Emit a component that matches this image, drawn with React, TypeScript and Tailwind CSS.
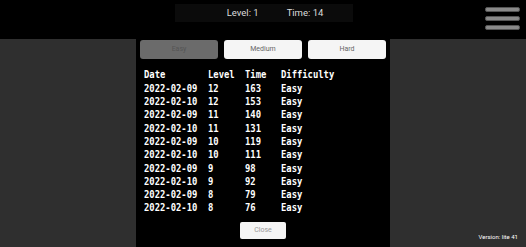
const rows: [string, string, string, string][] = [
  ["2022-02-09", "12", "163", "Easy"],
  ["2022-02-10", "12", "153", "Easy"],
  ["2022-02-09", "11", "140", "Easy"],
  ["2022-02-10", "11", "131", "Easy"],
  ["2022-02-09", "10", "119", "Easy"],
  ["2022-02-10", "10", "111", "Easy"],
  ["2022-02-09", "9", "98", "Easy"],
  ["2022-02-10", "9", "92", "Easy"],
  ["2022-02-09", "8", "79", "Easy"],
  ["2022-02-10", "8", "76", "Easy"],
];

// column widths are in unscaled units; the table is squeezed with scale-x
function Row({ cells }: { cells: string[] }) {
  return (
    <div className="flex h-[13.3px] items-center">
      <span className="w-[72.3px]">{cells[0]}</span>
      <span className="w-[41.8px]">{cells[1]}</span>
      <span className="w-[40.7px]">{cells[2]}</span>
      <span>{cells[3]}</span>
    </div>
  );
}

export default function App() {
  return (
    <div
      className="flex h-[247px] w-[526px] flex-col overflow-hidden bg-black"
      style={{ fontFamily: "Roboto, 'Liberation Sans', sans-serif" }}
    >
      <div className="flex h-[39px] items-start">
        <div className="ml-[175px] mt-[4px] flex h-[18px] w-[178px] items-center justify-center gap-[28px] bg-[#0b0b0b] pl-[22px] text-[9.5px] text-[#dddddd]">
          <span>Level: 1</span>
          <span>Time: 14</span>
        </div>
        <div className="ml-auto mr-[6px] mt-[7px] flex flex-col gap-[4px]">
          <div className="h-[5px] w-[35px] rounded-[2px] border border-[#555] bg-[#8a8a8a]" />
          <div className="h-[5px] w-[35px] rounded-[2px] border border-[#555] bg-[#8a8a8a]" />
          <div className="h-[5px] w-[35px] rounded-[2px] border border-[#555] bg-[#8a8a8a]" />
        </div>
      </div>
      <div className="flex flex-1">
        <div className="w-[136px] bg-[#2f2f2f]" />
        <div className="flex w-[254px] flex-col bg-black">
          <div className="mt-[1px] flex gap-[6px] px-[4px]">
            <button className="h-[19px] w-[78px] rounded-[3px] bg-[#6b6b6b] text-[7px] text-[#555]">Easy</button>
            <button className="h-[19px] w-[78px] rounded-[3px] bg-[#f5f5f5] text-[7px] text-[#666]">Medium</button>
            <button className="h-[19px] w-[78px] rounded-[3px] bg-[#f5f5f5] text-[7px] text-[#666]">Hard</button>
          </div>
          <div className="mt-[9px] pl-[8px]">
            <div
              className="origin-left scale-x-[0.885] text-[10px] font-bold leading-none whitespace-pre text-white"
              style={{ fontFamily: "'DejaVu Sans Mono', monospace" }}
            >
              <div className="mb-[0.8px]">
                <Row cells={["Date", "Level", "Time", "Difficulty"]} />
              </div>
              {rows.map((r, i) => (
                <Row key={i} cells={r} />
              ))}
            </div>
          </div>
          <div className="mt-[7px] flex justify-center">
            <button className="h-[17px] w-[46px] rounded-[2px] bg-[#f5f5f5] text-[7px] text-[#999]">Close</button>
          </div>
        </div>
        <div className="flex flex-1 items-end justify-end bg-[#2f2f2f] pb-[6px] pr-[8px]">
          <span className="text-[6px] text-white">Version: lite 41</span>
        </div>
      </div>
    </div>
  );
}
